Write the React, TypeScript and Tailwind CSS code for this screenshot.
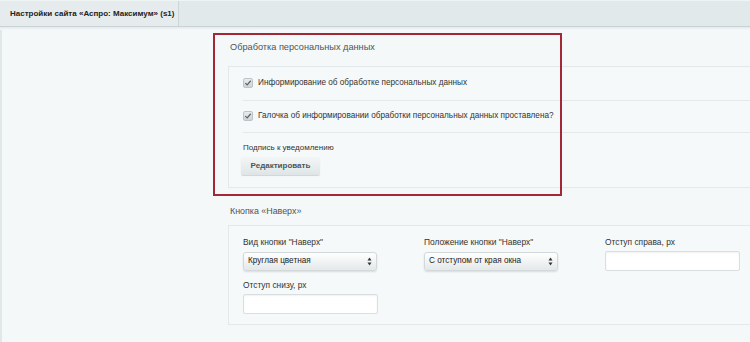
import React from "react";

const font = { fontFamily: '"Liberation Sans", Arial, sans-serif' };

function Check() {
  return (
    <span className="inline-flex h-[10px] w-[10px] items-center justify-center rounded-[2px] border border-[#bcc4c7] bg-gradient-to-b from-[#e8eced] to-[#cdd4d6]">
      <svg width="8" height="8" viewBox="0 0 9 9">
        <path d="M1.5 4.6 L3.6 6.7 L7.6 2" stroke="#5b6569" strokeWidth="1.4" fill="none" />
      </svg>
    </span>
  );
}

function Select({ value }: { value: string }) {
  return (
    <div className="flex h-[19px] w-[134px] items-center justify-between rounded-[3px] border border-[#d3d9db] bg-gradient-to-b from-[#ffffff] to-[#e4e8e9] pl-[4px] pr-[4px] text-[8.2px] text-[#222] shadow-[0_1px_2px_rgba(0,0,0,0.12)]">
      <span>{value}</span>
      <svg width="5" height="9" viewBox="0 0 5 9">
        <path d="M2.5 0.5 L4.5 3.5 L0.5 3.5 Z" fill="#333" />
        <path d="M2.5 8.5 L4.5 5.5 L0.5 5.5 Z" fill="#333" />
      </svg>
    </div>
  );
}

function Input() {
  return <div className="h-[20px] w-[135px] rounded-[2px] border border-[#d8dfe1] bg-white shadow-[inset_0_1px_2px_rgba(0,0,0,0.06)]" />;
}

export default function App() {
  return (
    <div className="relative flex h-[342px] w-[750px] flex-col overflow-hidden bg-[#f4f8f9]" style={font}>
      {/* top bar */}
      <div className="flex h-[27px] shrink-0 border-b border-[#c9d2d5] border-t border-t-[#eef3f4] bg-[#e2e9eb]">
        <div className="flex w-[179px] items-center border-r border-[#cdd5d8] bg-[#e6ecee] pl-[10px] text-[8px] font-bold text-[#222]">
          Настройки сайта «Аспро: Максимум» (s1)
        </div>
      </div>
      <div className="h-[3px] shrink-0 bg-gradient-to-b from-[#e4eaec] to-[#f4f8f9]" />

      <div className="flex flex-1 border-l-[2px] border-[#e1e8ea]">
        <div className="w-[226px] shrink-0" />
        <div className="flex flex-1 flex-col">
          {/* section 1 */}
          <div className="mt-[11px] pl-[2px] text-[9.2px] text-[#4a5559]">Обработка персональных данных</div>
          <div className="mt-[11px] flex flex-col border border-r-0 border-[#e3e9eb] bg-[#f5f9fa] pl-[14px]">
            <div className="flex h-[34px] items-center gap-[5px] border-b border-[#e3e9eb] text-[8.2px] text-[#333]">
              <Check />
              <span>Информирование об обработке персональных данных</span>
            </div>
            <div className="flex h-[32px] items-center gap-[5px] border-b border-[#e3e9eb] text-[8.2px] text-[#333]">
              <Check />
              <span>Галочка об информировании обработки персональных данных проставлена?</span>
            </div>
            <div className="flex h-[54px] flex-col pt-[9px] text-[8px] text-[#333]">
              <span>Подпись к уведомлению</span>
              <div className="-ml-[2px] mt-[3px] flex h-[18px] w-[79px] items-center justify-center rounded-[2px] bg-gradient-to-b from-[#f3f6f6] to-[#dfe5e6] text-[8px] font-bold text-[#4a575b] shadow-[0_1px_1px_rgba(0,0,0,0.15)]">
                Редактировать
              </div>
            </div>
          </div>

          {/* section 2 */}
          <div className="mt-[17px] pl-[2px] text-[8.9px] text-[#4a5559]">Кнопка «Наверх»</div>
          <div className="mt-[7px] flex h-[100px] border border-r-0 border-[#e3e9eb] bg-[#f5f9fa] pl-[14px] pt-[10px]">
            <div className="flex w-[181px] flex-col">
              <span className="text-[8.4px] text-[#333]">Вид кнопки "Наверх"</span>
              <div className="mt-[3px]"><Select value="Круглая цветная" /></div>
              <span className="mt-[8px] text-[8.4px] text-[#333]">Отступ снизу, px</span>
              <div className="mt-[3px]"><Input /></div>
            </div>
            <div className="flex w-[181px] flex-col">
              <span className="text-[8.4px] text-[#333]">Положение кнопки "Наверх"</span>
              <div className="mt-[3px]"><Select value="С отступом от края окна" /></div>
            </div>
            <div className="flex flex-col">
              <span className="text-[8.4px] text-[#333]">Отступ справа, px</span>
              <div className="mt-[2px]"><Input /></div>
            </div>
          </div>
        </div>
      </div>

      {/* red annotation frame */}
      <div className="pointer-events-none absolute left-[213px] top-[33px] h-[163px] w-[349px] border-[2px] border-[#a32734]" />
    </div>
  );
}
